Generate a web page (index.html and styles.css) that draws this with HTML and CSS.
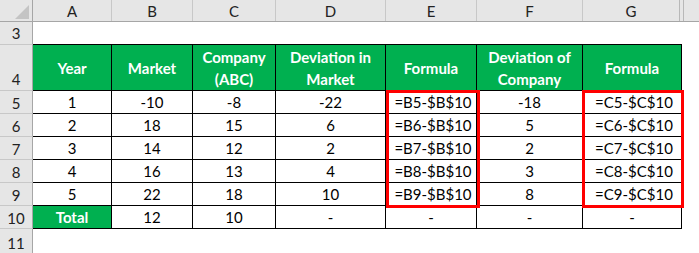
FILE: index.html
```html
<!DOCTYPE html>
<html>
<head>
<meta charset="utf-8">
<link rel="stylesheet" href="styles.css">
</head>
<body>
<div class="sheet">
  <div class="row colhdr">
    <div class="corner"><svg width="32" height="21" viewBox="0 0 32 21"><polygon points="29,5 29,19 15,19" fill="#c4c4c4"/></svg></div>
    <div class="ch">A</div><div class="ch">B</div><div class="ch">C</div><div class="ch">D</div><div class="ch">E</div><div class="ch">F</div><div class="ch g">G</div><div class="ch h"></div><div class="ch rest"></div>
  </div>
  <div class="row r3">
    <div class="rh">3</div><div class="blank span7"></div><div></div>
  </div>
  <div class="row r4">
    <div class="rh">4</div>
    <div class="hd">Year</div><div class="hd">Market</div><div class="hd">Company<br>(ABC)</div><div class="hd">Deviation in<br>Market</div><div class="hd">Formula</div><div class="hd">Deviation of<br>Company</div><div class="hd">Formula</div><div></div>
  </div>
  <div class="row dr"><div class="rh">5</div><div class="c">1</div><div class="c">-10</div><div class="c">-8</div><div class="c">-22</div><div class="c f">=B5-$B$10</div><div class="c">-18</div><div class="c f">=C5-$C$10</div><div></div></div>
  <div class="row dr"><div class="rh">6</div><div class="c">2</div><div class="c">18</div><div class="c">15</div><div class="c">6</div><div class="c f">=B6-$B$10</div><div class="c">5</div><div class="c f">=C6-$C$10</div><div></div></div>
  <div class="row dr"><div class="rh">7</div><div class="c">3</div><div class="c">14</div><div class="c">12</div><div class="c">2</div><div class="c f">=B7-$B$10</div><div class="c">2</div><div class="c f">=C7-$C$10</div><div></div></div>
  <div class="row dr"><div class="rh">8</div><div class="c">4</div><div class="c">16</div><div class="c">13</div><div class="c">4</div><div class="c f">=B8-$B$10</div><div class="c">3</div><div class="c f">=C8-$C$10</div><div></div></div>
  <div class="row dr"><div class="rh">9</div><div class="c">5</div><div class="c">22</div><div class="c">18</div><div class="c">10</div><div class="c f">=B9-$B$10</div><div class="c">8</div><div class="c f">=C9-$C$10</div><div></div></div>
  <div class="row dr"><div class="rh">10</div><div class="c total">Total</div><div class="c">12</div><div class="c">10</div><div class="c">-</div><div class="c">-</div><div class="c">-</div><div class="c">-</div><div></div></div>
  <div class="row r11"><div class="rh">11</div><div></div></div>
  <div class="redbox e"></div>
  <div class="redbox gbox"></div>
</div>
</body>
</html>
```
FILE: styles.css
```css
html, body {
  margin: 0;
  padding: 0;
  background: #fff;
}
.sheet {
  position: relative;
  width: 699px;
  height: 253px;
  overflow: hidden;
  font-family: Lato, "Liberation Sans", sans-serif;
  font-size: 15px;
  color: #000;
}
.row {
  display: grid;
  grid-template-columns: 33px 79px 81px 83px 110px 91px 106px 99px 1fr;
}
.row > div {
  box-sizing: border-box;
}
.colhdr {
  grid-template-columns: 33px 79px 81px 83px 110px 91px 106px 97px 4px 1fr;
  height: 22px;
  background: #e6e6e6;
  border-bottom: 1px solid #a6a6a6;
  box-sizing: border-box;
}
.corner {
  border-right: 1px solid #a6a6a6;
  display: flex;
}
.ch {
  border-right: 1px solid #c8c8c8;
  display: flex;
  align-items: center;
  justify-content: center;
  color: #222;
  font-size: 15px;
}
.ch.g { border-right: 1px solid #b8b8b8; }
.ch.h { border-right: 1px solid #b8b8b8; }
.ch.rest { border-right: none; }
.rh {
  background: #e6e6e6;
  border-right: 1px solid #a6a6a6;
  border-bottom: 1px solid #c8c8c8;
  display: flex;
  align-items: flex-end;
  justify-content: center;
  padding-bottom: 1px;
  color: #222;
}
.r3 { height: 23px; }
.r3 .rh { align-items: center; }
.span7 {
  grid-column: span 7;
  border-bottom: 1px solid #000;
}
.r4 { height: 46px; }
.r4 .rh { padding-bottom: 2px; }
.hd {
  background: #00b050;
  color: #fff;
  font-weight: 700;
  border-right: 1px solid #000;
  border-bottom: 1px solid #000;
  display: flex;
  align-items: center;
  justify-content: center;
  text-align: center;
  line-height: 22px;
  padding-bottom: 0;
}
.dr { height: 23px; }
.c {
  border-right: 1px solid #000;
  border-bottom: 1px solid #000;
  display: flex;
  align-items: center;
  justify-content: center;
  padding-bottom: 1px;
}
.c.f { padding-left: 4px; }
.c.total {
  background: #00b050;
  color: #fff;
  font-weight: 700;
}
.r11 { height: 24px; }
.r11 .rh { border-bottom: none; }
.redbox {
  position: absolute;
  top: 90px;
  height: 118px;
  border: 3px solid #ff0000;
  box-sizing: border-box;
}
.redbox.e { left: 386px; width: 94px; }
.redbox.gbox { left: 582px; width: 102px; }
```
